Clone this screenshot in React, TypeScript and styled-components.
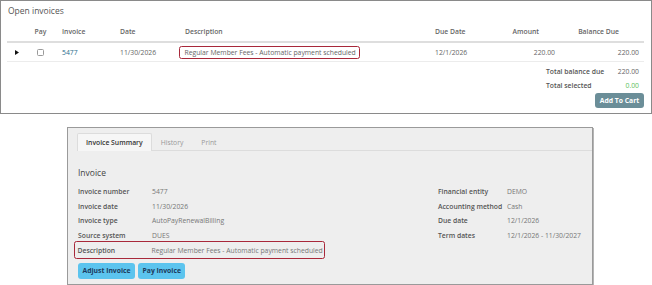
import React from 'react';
import styled, { createGlobalStyle } from 'styled-components';

const GlobalStyle = createGlobalStyle`
  html, body {
    margin: 0;
    padding: 0;
    background: #ffffff;
  }
  body {
    font-family: "Open Sans", "Liberation Sans", Arial, sans-serif;
    color: #555;
  }
`;

const cols = '18px 31px 58px 65px 250px 51px 81px 83px';
const small = '6.8px';

function Arrow() {
  return (
    <svg width="4" height="5" viewBox="0 0 4 5">
      <polygon points="0,0 4,2.5 0,5" fill="#111" />
    </svg>
  );
}

function App() {
  return (
    <Page>
      <GlobalStyle />
      <OpenPanel>
        <PanelTitle>Open invoices</PanelTitle>
        <HeadRow>
          <Cell />
          <Cell $align="center">Pay</Cell>
          <Cell $pl={6}>Invoice</Cell>
          <Cell $pl={6}>Date</Cell>
          <Cell $pl={6}>Description</Cell>
          <Cell $pl={6}>Due Date</Cell>
          <Cell $align="right" $pr={22}>Amount</Cell>
          <Cell $align="right" $pr={25}>Balance Due</Cell>
        </HeadRow>
        <BodyRow>
          <Cell $pl={8}>
            <Arrow />
          </Cell>
          <Cell $align="center">
            <CheckBox />
          </Cell>
          <Cell $pl={6}>
            <InvoiceLink>5477</InvoiceLink>
          </Cell>
          <Cell $pl={6}>11/30/2026</Cell>
          <Cell>
            <Highlight>Regular Member Fees - Automatic payment scheduled</Highlight>
          </Cell>
          <Cell $pl={6}>12/1/2026</Cell>
          <Cell $align="right" $pr={6}>220.00</Cell>
          <Cell $align="right" $pr={5}>220.00</Cell>
        </BodyRow>
        <Totals>
          <TotalRow>
            <TotalLabel>Total balance due</TotalLabel>
            <TotalValue>220.00</TotalValue>
          </TotalRow>
          <TotalRow>
            <TotalLabel>Total selected</TotalLabel>
            <TotalValue $green>0.00</TotalValue>
          </TotalRow>
        </Totals>
        <CartBar>
          <CartButton>Add To Cart</CartButton>
        </CartBar>
      </OpenPanel>

      <SummaryPanel>
        <Tabs>
          <Tab $active>Invoice Summary</Tab>
          <Tab>History</Tab>
          <Tab>Print</Tab>
        </Tabs>
        <SummaryBody>
          <Heading>Invoice</Heading>
          <Details>
            <DetailCol $labelWidth={74}>
              <DetailRow>
                <DetailLabel>Invoice number</DetailLabel>
                <DetailValue>5477</DetailValue>
              </DetailRow>
              <DetailRow>
                <DetailLabel>Invoice date</DetailLabel>
                <DetailValue>11/30/2026</DetailValue>
              </DetailRow>
              <DetailRow>
                <DetailLabel>Invoice type</DetailLabel>
                <DetailValue>AutoPayRenewalBilling</DetailValue>
              </DetailRow>
              <DetailRow>
                <DetailLabel>Source system</DetailLabel>
                <DetailValue>DUES</DetailValue>
              </DetailRow>
              <DetailRow $highlight>
                <DetailLabel>Description</DetailLabel>
                <DetailValue>Regular Member Fees - Automatic payment scheduled</DetailValue>
              </DetailRow>
            </DetailCol>
            <DetailCol $labelWidth={69}>
              <DetailRow>
                <DetailLabel>Financial entity</DetailLabel>
                <DetailValue>DEMO</DetailValue>
              </DetailRow>
              <DetailRow>
                <DetailLabel>Accounting method</DetailLabel>
                <DetailValue>Cash</DetailValue>
              </DetailRow>
              <DetailRow>
                <DetailLabel>Due date</DetailLabel>
                <DetailValue>12/1/2026</DetailValue>
              </DetailRow>
              <DetailRow>
                <DetailLabel>Term dates</DetailLabel>
                <DetailValue>12/1/2026 - 11/30/2027</DetailValue>
              </DetailRow>
            </DetailCol>
          </Details>
          <Actions>
            <BlueButton>Adjust Invoice</BlueButton>
            <BlueButton>Pay Invoice</BlueButton>
          </Actions>
        </SummaryBody>
      </SummaryPanel>
    </Page>
  );
}

const Page = styled.div`
  display: flex;
  flex-direction: column;
  width: 652px;
`;

const OpenPanel = styled.div`
  box-sizing: border-box;
  width: 652px;
  height: 114px;
  border: 1px solid #8a8a8a;
  padding: 0 7px 0 6px;
`;

const PanelTitle = styled.div`
  height: 20px;
  line-height: 20px;
  font-size: 8.5px;
  color: #555;
  padding-left: 1px;
`;

const HeadRow = styled.div`
  display: grid;
  grid-template-columns: ${cols};
  height: 20px;
  align-items: center;
  border-bottom: 2px solid #dedede;
  font-size: ${small};
  font-weight: 600;
  color: #666;
`;

const BodyRow = styled.div`
  display: grid;
  grid-template-columns: ${cols};
  height: 18px;
  align-items: center;
  border-bottom: 1px solid #ececec;
  font-size: ${small};
  color: #666;
`;

const Cell = styled.div<{ $align?: string; $pl?: number; $pr?: number }>`
  display: flex;
  align-items: center;
  justify-content: ${(p) =>
    p.$align === 'center' ? 'center' : p.$align === 'right' ? 'flex-end' : 'flex-start'};
  padding-left: ${(p) => p.$pl ?? 0}px;
  padding-right: ${(p) => p.$pr ?? 0}px;
  white-space: nowrap;
`;

const CheckBox = styled.span`
  display: block;
  width: 5px;
  height: 5px;
  border: 1px solid #9a9a9a;
  border-radius: 1.5px;
  background: #fff;
`;

const InvoiceLink = styled.span`
  color: #2c6d8c;
`;

const Highlight = styled.span`
  display: inline-block;
  border: 1.5px solid #a8283a;
  border-radius: 2.5px;
  padding: 1px 3px 1px 4.5px;
  line-height: 9px;
`;

const Totals = styled.div`
  display: flex;
  flex-direction: column;
  padding-top: 2px;
`;

const TotalRow = styled.div`
  display: flex;
  justify-content: flex-end;
  height: 14px;
  align-items: center;
  padding-right: 5px;
  font-size: ${small};
`;

const TotalLabel = styled.span`
  width: 60px;
  font-weight: 600;
  color: #555;
`;

const TotalValue = styled.span<{ $green?: boolean }>`
  width: 33px;
  text-align: right;
  color: ${(p) => (p.$green ? '#5cbf5c' : '#666')};
`;

const CartBar = styled.div`
  display: flex;
  justify-content: flex-end;
  margin-top: 1px;
`;

const CartButton = styled.button`
  width: 49px;
  height: 15px;
  padding: 0;
  border: none;
  border-radius: 3px;
  background: #6b8e98;
  color: #fff;
  font-family: inherit;
  font-size: ${small};
  font-weight: 700;
`;

const SummaryPanel = styled.div`
  box-sizing: border-box;
  width: 526px;
  height: 158px;
  margin: 13px 0 0 67px;
  border: 1px solid #9a9a9a;
  box-shadow: 1px 1px 0 #b5b5b5;
  background: #eeeeee;
  padding: 4px 0 0 9px;
`;

const Tabs = styled.div`
  display: flex;
  height: 18px;
  border-bottom: 1px solid #dcdcdc;
  align-items: flex-end;
`;

const Tab = styled.div<{ $active?: boolean }>`
  box-sizing: border-box;
  height: ${(p) => (p.$active ? '18px' : '17px')};
  line-height: 17px;
  padding: 0 ${(p) => (p.$active ? '8px' : '8px')};
  font-size: ${small};
  font-weight: ${(p) => (p.$active ? 600 : 400)};
  color: ${(p) => (p.$active ? '#333' : '#999')};
  background: ${(p) => (p.$active ? '#f6f6f6' : 'transparent')};
  border: 1px solid ${(p) => (p.$active ? '#dcdcdc' : 'transparent')};
  border-bottom: none;
  border-radius: 2px 2px 0 0;
  margin-bottom: ${(p) => (p.$active ? '-1px' : '0')};
`;

const SummaryBody = styled.div`
  display: flex;
  flex-direction: column;
  padding: 14px 0 0 1px;
`;

const Heading = styled.div`
  height: 16px;
  line-height: 16px;
  font-size: 8.5px;
  color: #444;
  margin-bottom: 3px;
`;

const Details = styled.div`
  display: grid;
  grid-template-columns: 360px 1fr;
`;

const DetailCol = styled.div<{ $labelWidth: number }>`
  display: flex;
  flex-direction: column;
  & > div > span:first-child {
    width: ${(p) => p.$labelWidth}px;
  }
`;

const DetailRow = styled.div<{ $highlight?: boolean }>`
  display: flex;
  align-items: center;
  height: 14.7px;
  font-size: ${small};
  white-space: nowrap;
  ${(p) =>
    p.$highlight &&
    `
    width: 251px;
    box-sizing: border-box;
    height: 18px;
    margin: -1.5px 0 -1.8px -4px;
    padding-left: 2.5px;
    border: 1.5px solid #a8283a;
    border-radius: 2.5px;
  `}
`;

const DetailLabel = styled.span`
  flex-shrink: 0;
  font-weight: 600;
  color: #555;
`;

const DetailValue = styled.span`
  color: #777;
`;

const Actions = styled.div`
  display: flex;
  gap: 3px;
  margin-top: 5.5px;
`;

const BlueButton = styled.button`
  height: 16px;
  padding: 0 4.5px;
  border: none;
  border-radius: 3px;
  background: #5cc4ee;
  color: #1c3a5c;
  font-family: inherit;
  font-size: ${small};
  font-weight: 700;
`;

export default App;
